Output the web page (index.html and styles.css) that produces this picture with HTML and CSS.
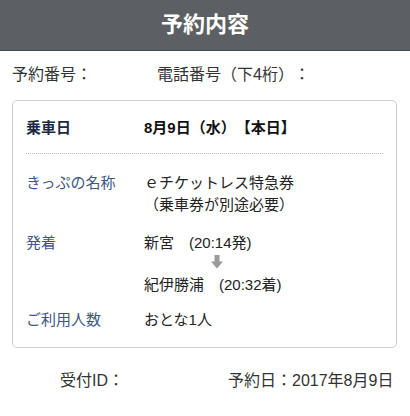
FILE: index.html
```html
<!DOCTYPE html>
<html lang="ja">
<head>
<meta charset="utf-8">
<link rel="stylesheet" href="styles.css">
</head>
<body>
<header class="header"><h1 class="title">予約内容</h1></header>
<div class="topline">
  <span class="top-resv">予約番号：</span>
  <span class="top-tel">電話番号（下4桁）：</span>
</div>
<section class="card">
  <div class="row row-date">
    <div class="label label-strong">乗車日</div>
    <div class="value value-strong">8月9日（水）【本日】</div>
  </div>
  <div class="row row-name">
    <div class="label">きっぷの名称</div>
    <div class="value">ｅチケットレス特急券<br>（乗車券が別途必要）</div>
  </div>
  <div class="row row-route">
    <div class="label">発着</div>
    <div class="value">
      <div>新宮　(20:14発)</div>
      <div class="arrow"><svg width="12" height="14" viewBox="0 0 12 14"><path d="M3.5 0H8.5V6.5H12L6 13.5L0 6.5H3.5Z" fill="#9a9a9a"/></svg></div>
      <div>紀伊勝浦　(20:32着)</div>
    </div>
  </div>
  <div class="row row-people">
    <div class="label">ご利用人数</div>
    <div class="value">おとな1人</div>
  </div>
</section>
<div class="footer">
  <span class="foot-id">受付ID：</span>
  <span class="foot-date">予約日：2017年8月9日</span>
</div>
</body>
</html>
```
FILE: styles.css
```css
* { box-sizing: border-box; }
html, body { margin: 0; padding: 0; background: #fff; }
body {
  font-family: "Liberation Sans", "Noto Sans CJK JP", sans-serif;
  font-size: 15px;
  color: #333;
  width: 410px;
  text-spacing-trim: space-all;
}
.header {
  height: 51px;
  background: #5c5f64;
  border-bottom: 1px solid #45484c;
  display: flex;
  align-items: center;
  justify-content: center;
}
.title {
  margin: 0;
  color: #fff;
  font-size: 22px;
  font-weight: bold;
  line-height: 30px;
}
.topline {
  display: flex;
  padding-left: 12px;
  margin-top: 13px;
  font-size: 16px;
  line-height: 22px;
  color: #333;
}
.top-resv { width: 145px; }
.card {
  margin: 14px 13px 0 12px;
  border: 1px solid #cfcfcf;
  border-radius: 5px;
  padding: 16px 13px 16px 13px;
}
.row {
  display: grid;
  grid-template-columns: 118px 1fr;
  line-height: 22px;
}
.label { color: #3d5684; }
.label-strong { color: #1b2946; font-weight: bold; }
.value { color: #222; }
.value-strong { font-weight: bold; color: #111; }
.row-date {
  padding-bottom: 14px;
  border-bottom: 1px dotted #bbb;
}
.row-name { padding-top: 18px; }
.row-route { padding-top: 16px; }
.row-people { padding-top: 13px; }
.arrow {
  height: 20px;
  padding-top: 1px;
  margin-left: 67px;
  line-height: 0;
}
.footer {
  display: flex;
  margin-top: 22px;
  font-size: 16px;
  line-height: 22px;
  color: #333;
}
.foot-id { padding-left: 60px; width: 228px; }
```
